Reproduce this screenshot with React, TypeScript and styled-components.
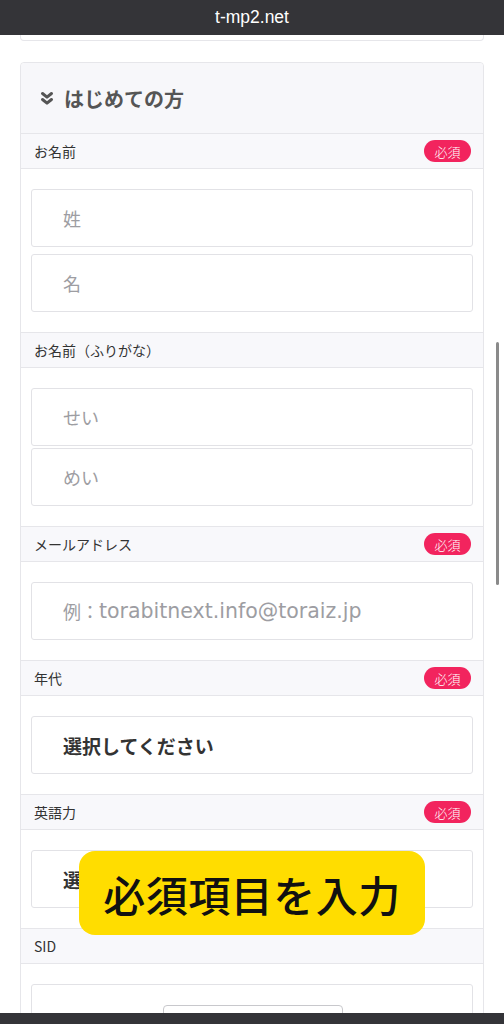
import styled, { createGlobalStyle } from 'styled-components'

const GlobalStyle = createGlobalStyle`
  html, body {
    margin: 0;
    padding: 0;
    background: #fff;
  }
  body {
    font-family: 'Noto Sans CJK JP', 'Noto Sans', sans-serif;
    color: #333;
  }
  * {
    box-sizing: border-box;
  }
`

const Screen = styled.div`
  width: 504px;
  height: 1024px;
  display: flex;
  flex-direction: column;
  overflow: hidden;
`

const TopBar = styled.div`
  height: 35px;
  flex: none;
  background: #343438;
  color: #fff;
  display: flex;
  align-items: center;
  justify-content: center;
  font-family: 'Liberation Sans', Arial, sans-serif;
  font-size: 17.5px;
`

const BottomBar = styled.div`
  height: 11px;
  flex: none;
  background: #343438;
`

const Viewport = styled.div`
  flex: 1;
  position: relative;
  overflow: hidden;
  padding: 0 20px;
`

const PrevCardEdge = styled.div`
  height: 6px;
  border: 1px solid #e6e6ea;
  border-top: none;
  border-radius: 0 0 4px 4px;
  background: #fff;
`

const Card = styled.div`
  margin-top: 21px;
  border: 1px solid #e6e6ea;
  border-radius: 4px;
  background: #fff;
`

const CardHeader = styled.div`
  height: 70px;
  background: #f7f7fa;
  display: flex;
  align-items: center;
  gap: 10px;
  padding-left: 19px;
  border-radius: 4px 4px 0 0;
  font-size: 20px;
  font-weight: 700;
  color: #555;
`

const LabelRow = styled.div`
  height: 36px;
  background: #f8f8fb;
  border-top: 1px solid #e6e6ea;
  border-bottom: 1px solid #e6e6ea;
  display: flex;
  align-items: center;
  justify-content: space-between;
  padding: 0 12px 0 13px;
  font-size: 14px;
  color: #333;
`

const Badge = styled.span`
  display: inline-flex;
  align-items: center;
  justify-content: center;
  width: 47px;
  height: 22px;
  border-radius: 11px;
  background: #f2245e;
  color: #fff;
  font-size: 13px;
  font-weight: 300;
`

const FieldBody = styled.div<{ gap: number }>`
  display: flex;
  flex-direction: column;
  gap: ${({ gap }) => gap}px;
  padding: 20px 10px;
`

const InputBox = styled.div<{ bold?: boolean }>`
  height: 58px;
  border: 1px solid #e2e2e6;
  border-radius: 3px;
  background: #fff;
  display: flex;
  align-items: center;
  padding-left: 31px;
  font-size: ${({ bold }) => (bold ? 19 : 18)}px;
  font-weight: ${({ bold }) => (bold ? 700 : 400)};
  color: ${({ bold }) => (bold ? '#333' : '#9d9da2')};
  position: relative;
`

const Latin = styled.span`
  font-family: 'DejaVu Sans', 'Noto Sans CJK JP', sans-serif;
  font-size: 20.5px;
`

const InnerButton = styled.div`
  position: absolute;
  left: 131px;
  top: 20px;
  width: 180px;
  height: 40px;
  border: 1px solid #c8c8cc;
  border-radius: 4px;
  background: #fff;
`

const Scrollbar = styled.div`
  position: absolute;
  top: 307px;
  right: 5px;
  width: 3px;
  height: 243px;
  border-radius: 2px;
  background: #8a8a8a;
`

const Toast = styled.div`
  position: absolute;
  top: 816px;
  left: 79px;
  width: 346px;
  height: 84px;
  border-radius: 16px;
  background: #ffdd00;
  display: flex;
  align-items: center;
  justify-content: center;
  font-size: 42px;
  font-weight: 500;
  color: #111;
  letter-spacing: 0.5px;
`

type Field = {
  label: string
  required?: boolean
  gap?: number
  inputs: { text: string; latin?: string; bold?: boolean; button?: boolean }[]
}

const fields: Field[] = [
  { label: 'お名前', required: true, gap: 7, inputs: [{ text: '姓' }, { text: '名' }] },
  { label: 'お名前（ふりがな）', gap: 2, inputs: [{ text: 'せい' }, { text: 'めい' }] },
  { label: 'メールアドレス', required: true, inputs: [{ text: '例：', latin: 'torabitnext.info@toraiz.jp' }] },
  { label: '年代', required: true, inputs: [{ text: '選択してください', bold: true }] },
  { label: '英語力', required: true, inputs: [{ text: '選択してください', bold: true }] },
  { label: 'SID', inputs: [{ text: '', button: true }] },
]

const ChevronsDown = () => (
  <svg width="14" height="15" viewBox="0 0 14 15" fill="none" stroke="#555" strokeWidth="3" strokeLinecap="round" strokeLinejoin="round">
    <path d="M2.5 2.5 L7 6.2 L11.5 2.5" />
    <path d="M2.5 8.5 L7 12.2 L11.5 8.5" />
  </svg>
)

export default function App() {
  return (
    <>
      <GlobalStyle />
      <Screen>
        <TopBar>t-mp2.net</TopBar>
        <Viewport>
          <PrevCardEdge />
          <Card>
            <CardHeader>
              <ChevronsDown />
              <span>はじめての方</span>
            </CardHeader>
            {fields.map((f) => (
              <div key={f.label}>
                <LabelRow>
                  <span>{f.label}</span>
                  {f.required && <Badge>必須</Badge>}
                </LabelRow>
                <FieldBody gap={f.gap ?? 6}>
                  {f.inputs.map((inp, i) => (
                    <InputBox key={i} bold={inp.bold}>
                      {inp.text}
                      {inp.latin && <Latin>{inp.latin}</Latin>}
                      {inp.button && <InnerButton />}
                    </InputBox>
                  ))}
                </FieldBody>
              </div>
            ))}
          </Card>
          <Scrollbar />
          <Toast>必須項目を入力</Toast>
        </Viewport>
        <BottomBar />
      </Screen>
    </>
  )
}
